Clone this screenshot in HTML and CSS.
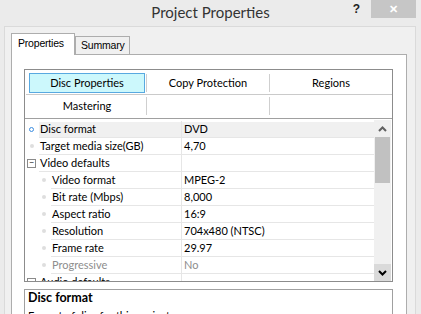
FILE: index.html
```html
<!DOCTYPE html>
<html lang="en">
<head>
  <meta charset="utf-8">
  <title>Project Properties</title>
  <link rel="stylesheet" href="styles.css">
</head>
<body>

<div id="titlebar">
  <div class="side"></div>
  <div id="caption">Project Properties</div>
  <div class="side right">
    <span id="help">?</span>
    <span id="close">&#x2715;</span>
  </div>
</div>

<div id="frame">
  <div id="tabs">
    <div class="tab active">Properties</div>
    <div class="tab">Summary</div>
  </div>

  <div id="tabpage">
    <div id="props">
      <!-- category buttons -->
      <div id="toolbar">
        <div class="tool"><span class="btn selected">Disc Properties</span></div>
        <div class="divider"></div>
        <div class="tool"><span class="btn">Copy Protection</span></div>
        <div class="divider"></div>
        <div class="tool"><span class="btn">Regions</span></div>

        <div class="hline"></div>

        <div class="tool"><span class="btn">Mastering</span></div>
        <div class="divider"></div>
        <div class="tool"></div>
        <div class="divider"></div>
        <div class="tool"></div>
      </div>

      <!-- property grid -->
      <div id="grid">
        <div id="rows">
          <div class="row selected">
            <div class="gutter"><i class="dot focus"></i></div>
            <div class="name">Disc format</div>
            <div class="vsep"></div>
            <div class="value">DVD</div>
          </div>
          <div class="row">
            <div class="gutter"><i class="dot"></i></div>
            <div class="name">Target media size(GB)</div>
            <div class="vsep"></div>
            <div class="value">4,70</div>
          </div>
          <div class="row">
            <div class="gutter"><i class="toggle">&minus;</i></div>
            <div class="name">Video defaults</div>
            <div class="vsep"></div>
            <div class="value"></div>
          </div>
          <div class="row child">
            <div class="gutter"><i class="dot"></i></div>
            <div class="name">Video format</div>
            <div class="vsep"></div>
            <div class="value">MPEG-2</div>
          </div>
          <div class="row child">
            <div class="gutter"><i class="dot"></i></div>
            <div class="name">Bit rate (Mbps)</div>
            <div class="vsep"></div>
            <div class="value">8,000</div>
          </div>
          <div class="row child">
            <div class="gutter"><i class="dot"></i></div>
            <div class="name">Aspect ratio</div>
            <div class="vsep"></div>
            <div class="value">16:9</div>
          </div>
          <div class="row child">
            <div class="gutter"><i class="dot"></i></div>
            <div class="name">Resolution</div>
            <div class="vsep"></div>
            <div class="value">704x480 (NTSC)</div>
          </div>
          <div class="row child">
            <div class="gutter"><i class="dot"></i></div>
            <div class="name">Frame rate</div>
            <div class="vsep"></div>
            <div class="value">29.97</div>
          </div>
          <div class="row child disabled">
            <div class="gutter"><i class="dot"></i></div>
            <div class="name">Progressive</div>
            <div class="vsep"></div>
            <div class="value">No</div>
          </div>
          <div class="row">
            <div class="gutter"><i class="toggle">&minus;</i></div>
            <div class="name">Audio defaults</div>
            <div class="vsep"></div>
            <div class="value"></div>
          </div>
        </div>

        <div id="scrollbar">
          <div class="arrow">
            <svg width="9" height="6" viewBox="0 0 9 6"><path d="M1 5 L4.5 1.5 L8 5" fill="none" stroke="#606060" stroke-width="2"/></svg>
          </div>
          <div class="thumb"></div>
          <div class="track"></div>
          <div class="arrow down">
            <svg width="9" height="6" viewBox="0 0 9 6"><path d="M1 1 L4.5 4.5 L8 1" fill="none" stroke="#000" stroke-width="2"/></svg>
          </div>
        </div>
      </div>
    </div>

    <div id="desc">
      <div class="heading">Disc format</div>
      <div class="text">Format of disc for this project</div>
    </div>
  </div>
</div>

</body>
</html>
```
FILE: styles.css
```css
html, body {
  margin: 0;
  height: 314px;
  overflow: hidden;
  background-color: #ebebeb;
  font-family: Lato, "Liberation Sans", sans-serif;
  font-size: 11px;
  color: #000;
}

/* title bar */
#titlebar {
  display: grid;
  grid-template-columns: 1fr auto 1fr;
  height: 26px;
}
#caption {
  font-size: 15px;
  color: #333;
  line-height: 24px;
}
.side.right {
  display: flex;
  justify-content: flex-end;
  align-items: flex-start;
}
#help {
  font-family: "Liberation Sans", sans-serif;
  font-weight: bold;
  font-size: 12px;
  color: #222;
  margin: 2px 11px 0 0;
}
#close {
  width: 45px;
  height: 18px;
  margin-right: 5px;
  background-color: #c6c6c6;
  color: #fff;
  font-size: 11px;
  font-weight: bold;
  text-align: center;
  line-height: 17px;
}

/* dialog frame */
#frame {
  margin: 0 5px 0 4px;
  height: 300px;
  border: 1px solid #dadada;
  border-bottom: none;
  background-color: #f0f0f0;
  padding: 7px 8px 0 6px;
}

#tabs {
  display: flex;
  align-items: flex-end;
  height: 20px;
}
.tab {
  position: relative;
  font-family: "Liberation Sans", sans-serif;
  font-size: 10.5px;
  letter-spacing: -0.2px;
  border: 1px solid #adadad;
  border-bottom: none;
  background-color: #f0f0f0;
  height: 17px;
  line-height: 17px;
  padding: 0 4px 0 5px;
}
.tab.active {
  background-color: #fff;
  height: 20px;
  line-height: 19px;
  width: 51px;
  padding: 0 5px 0 6px;
  margin-bottom: -1px;
  height: 21px;
  z-index: 1;
}

#tabpage {
  background-color: #fff;
  border: 1px solid #adadad;
  height: 300px;
  padding: 14px 13px 0 12px;
}

/* property panel */
#props {
  border: 1px solid #8c8c8c;
  height: 211px;
  display: flex;
  flex-direction: column;
}

#toolbar {
  display: grid;
  grid-template-columns: 121px 1px 122px 1px 1fr;
  grid-template-rows: 24px 1px 23px;
}
.tool {
  display: flex;
  text-align: center;
}
.btn {
  flex: 1;
  line-height: 18px;
  border: 1px solid transparent;
}
.tool:nth-child(1) .btn {
  margin: 3px 1px 1px 4px;
}
.tool:nth-child(3) .btn, .tool:nth-child(5) .btn {
  margin: 3px 0 1px 0;
}
.tool:nth-child(7) .btn {
  margin: 1px 1px 1px 4px;
}
.btn.selected {
  background-color: #ccf8fc;
  border-color: #58a9e0;
}
.divider {
  background-color: #cfcfcf;
  margin: 4px 0 2px;
}
.hline {
  grid-column: 1 / 6;
  background-color: #cacaca;
  margin: 0 0 0 1px;
}
.hline ~ .divider {
  margin: 2px 0 3px;
}

#grid {
  flex: 1;
  display: flex;
  border-top: 1px solid #a0a0a0;
  padding-top: 1px;
  overflow: hidden;
}
#rows {
  flex: 1;
  padding-top: 1px;
  overflow: hidden;
}
.row {
  display: flex;
  height: 17px;
  line-height: 16px;
}
.gutter {
  width: 9px;
  padding-right: 5px;
  display: flex;
  justify-content: flex-end;
  align-items: center;
  padding-bottom: 1px;
}
.child .gutter {
  width: 21px;
}
.name {
  flex: 1;
  border-bottom: 1px solid #e6e6e6;
  padding-left: 1px;
}
.vsep {
  width: 1px;
  background-color: #e6e6e6;
}
.value {
  width: 190px;
  border-bottom: 1px solid #e6e6e6;
  padding-left: 2px;
}
.selected .name, .selected .value {
  background-color: #f0f0f0;
  box-shadow: inset 0 1px #fff;
}
.disabled .name, .disabled .value {
  color: #8d8d8d;
}

.dot {
  display: block;
  width: 4px;
  height: 4px;
  border-radius: 50%;
  background-color: #dedede;
}
.dot.focus {
  width: 3px;
  height: 3px;
  background-color: transparent;
  border: 1px solid #3b8de0;
}
.toggle {
  display: block;
  width: 7px;
  height: 7px;
  border: 1px solid #8a8a8a;
  margin-right: -2px;
  font-style: normal;
  font-size: 9px;
  line-height: 6px;
  text-align: center;
  color: #333;
}

#scrollbar {
  width: 17px;
  display: flex;
  flex-direction: column;
  background-color: #f0f0f0;
  margin-right: 1px;
}
.arrow {
  height: 17px;
  display: flex;
  justify-content: center;
  align-items: center;
}
.arrow.down {
  background-color: #dadada;
}
.thumb {
  height: 46px;
  margin: 0 1px;
  background-color: #c1c1c1;
}
.track {
  flex: 1;
}

/* description */
#desc {
  margin-top: 7px;
  border: 1px solid #a0a0a0;
  height: 60px;
  padding: 0 3px;
}
.heading {
  font-weight: bold;
  font-size: 12.5px;
  line-height: 16px;
}
.text {
  line-height: 16px;
  margin-top: 2px;
}
```
